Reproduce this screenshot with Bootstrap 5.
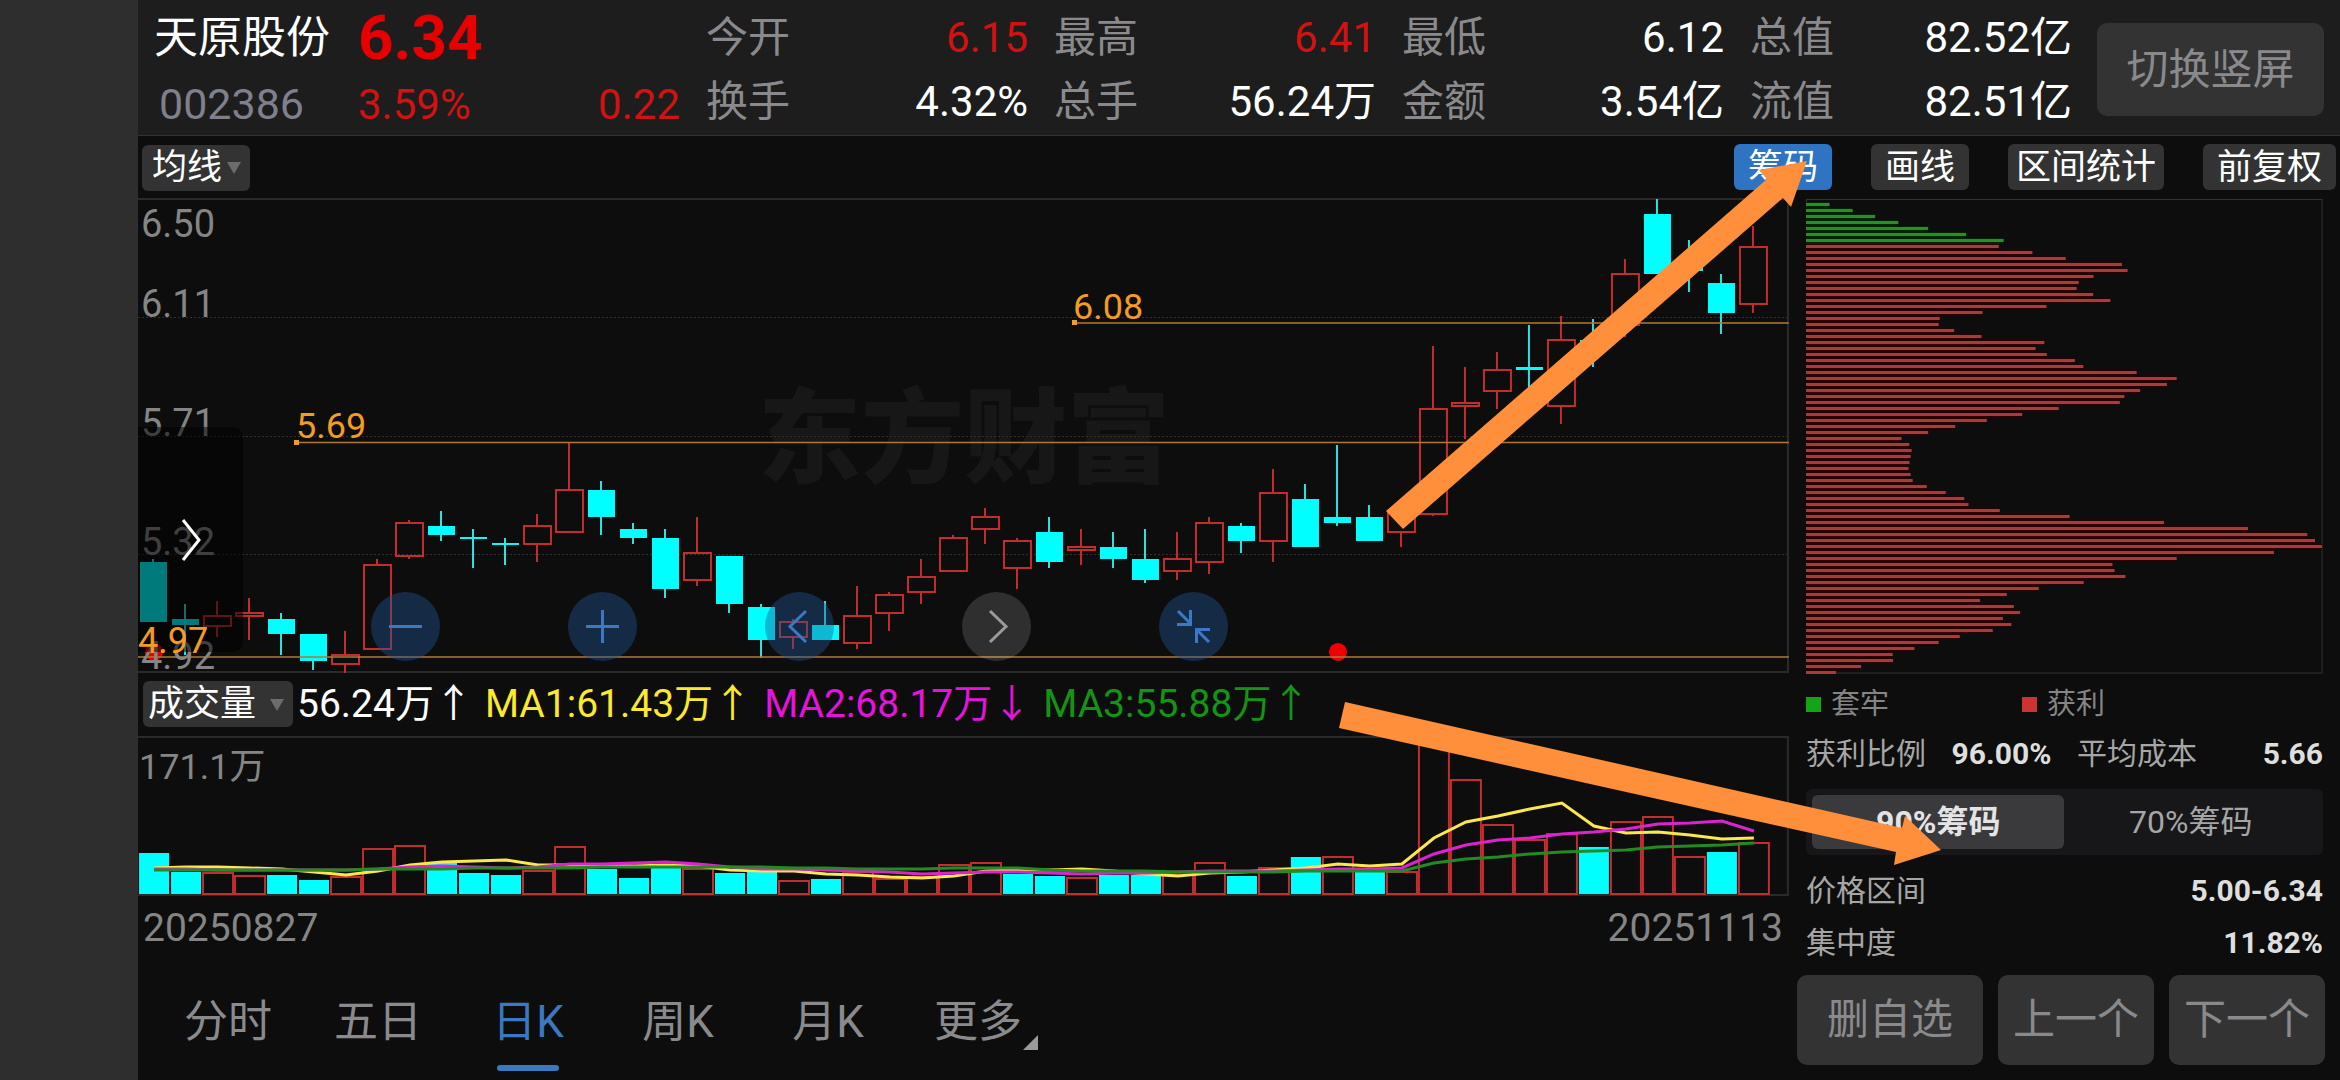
<!DOCTYPE html>
<html lang="zh-CN" data-bs-theme="dark">
<head>
<meta charset="utf-8">
<meta name="viewport" content="width=device-width, initial-scale=1">
<title>天原股份 002386 日K</title>
<link href="https://cdn.jsdelivr.net/npm/bootstrap@5.3.0/dist/css/bootstrap.min.css" rel="stylesheet">
<style>
  :root { --ink: #0d0d0d; --bar: #1d1d1d; --key: #333333; --rule: #2a2a2a; --dim: #8a8a8d; --blue: #3a78bf; --up: #e60000; }
  body { background: var(--ink); color: #fff; font-family: Roboto, "Noto Sans CJK SC", sans-serif; font-size: 42px; line-height: 1; }
  svg { display: block; }
  .side-strip { width: 138px; background: #2e2e2e; }
  .quote-head { background: var(--bar); border-bottom: 1px solid #333; height: 136px; padding: 4px 16px 0; }
  .quote-name { width: 204px; }
  .quote-name h1 { font-size: 44px; line-height: 1; height: 70px; }
  .quote-code { color: #7f7f8e; padding-left: 5px; font-size: 43px; }
  .quote-price { width: 322px; margin-right: 26px; }
  .quote-price strong { font-size: 62px; font-weight: 700; height: 70px; color: var(--up); }
  .quote-line { height: 64px; }
  .rise { color: #d01212; }
  .quote-stats { display: grid; grid-template-columns: repeat(4, 1fr); column-gap: 26px; grid-auto-rows: 64px; margin-right: 25px; }
  .quote-stats dt { font-weight: 400; color: var(--dim); }
  .key-btn { background: var(--key); color: var(--dim); border: 0; border-radius: 10px; font-size: 42px; line-height: 1; white-space: nowrap; }
  .key-btn:hover { background: #3d3d3d; color: #aaa; }
  .turn-btn { height: 93px; width: 227px; }
  .tool-row { height: 62px; padding: 0 4px; }
  .tool-btn { background: var(--key); color: #fff; border: 0; border-radius: 6px; font-size: 35px; line-height: 1; height: 46px; padding: 0 14px; white-space: nowrap; }
  .tool-btn.tight { padding: 0 8px; }
  .tool-btn.on { background: #2f73c3; }
  .tool-keys { gap: 39px; }
  .pick { position: relative; }
  .pick select { appearance: none; background: var(--key); color: #fff; border: 0; border-radius: 6px; height: 46px; line-height: 46px; }
  .pick svg { position: absolute; right: 9px; top: 18px; pointer-events: none; }
  .pick-line select { width: 108px; padding: 0 0 0 10px; font-size: 35px; }
  .pick-vol select { width: 150px; padding: 0 0 0 5px; font-size: 36px; }
  .plot { width: 100%; height: auto; }
  .axis-text { fill: #858585; font-size: 38px; }
  .mark-text { fill: #f39c22; font-size: 36px; }
  .brand-text { fill: #171717; font-size: 103px; font-weight: 900; }
  .fold-btn { position: absolute; left: 0; top: 229px; width: 105px; height: 225px; background: rgba(0,0,0,.52); border: 0; border-radius: 0 10px 10px 0; padding: 0 0 0 36px; }
  .low-tag { position: absolute; left: 0; top: 425px; color: #f39c22; font-size: 36px; line-height: 36px; }
  .pan-keys { position: absolute; left: 233px; top: 394px; gap: 128px; }
  .pan-btn { width: 69px; height: 69px; border: 0; border-radius: 50%; padding: 0; background: rgba(34,86,148,.42); color: #3c78c4; }
  .pan-btn.idle { background: rgba(255,255,255,.14); color: #9a9a9a; }
  .vol-row { height: 63px; padding-left: 5px; font-size: 39px; white-space: nowrap; }
  .vol-row > span { margin-right: 12px; }
  .ma-one { color: #fbe92d; }
  .ma-two { color: #e414dc; }
  .ma-three { color: #149414; }
  .date-row { height: 64px; padding: 2px 6px 0 5px; color: #858585; font-size: 39px; }
  .period-nav { padding-left: 15px; }
  .period-nav a { position: relative; width: 150px; height: 120px; padding-top: 4px; color: var(--dim); font-size: 44px; text-decoration: none; }
  .period-nav a.active { color: var(--blue); }
  .period-nav a.active::after { content: ""; position: absolute; left: 44px; right: 44px; bottom: 9px; height: 6px; border-radius: 3px; background: var(--blue); }
  .period-nav svg { position: absolute; right: 15px; bottom: 30px; }
  .chip-side { flex: 0 0 551px; }
  .chip-body { padding: 0 17px; font-size: 30px; color: #a6a6a6; }
  .chip-legend { height: 60px; font-size: 29px; color: #858585; }
  .chip-legend span { width: 216px; }
  .chip-legend i { width: 15px; height: 15px; margin-right: 10px; }
  .chip-legend .held { background: #14a514; }
  .chip-legend .gain { background: #cc3333; }
  .chip-row { height: 52px; padding-top: 2px; }
  .chip-row.first { height: 38px; margin-bottom: 17px; }
  .chip-row b { color: #dedede; }
  .chip-switch { height: 66px; background: #17171a; border-radius: 6px; padding: 6px; margin-bottom: 9px; }
  .chip-switch button { background: none; border: 0; border-radius: 6px; color: #a6a6a6; font-size: 32px; line-height: 1; }
  .chip-switch button.on { background: #3a3a3c; color: #e4e4e4; font-weight: 700; }
  .stock-keys { gap: 15px; padding: 7px 15px 15px 8px; }
  .stock-keys .key-btn { height: 90px; padding: 0 15px; }
  .stock-keys .wide { padding: 0 30px; }
  .pointer-layer { position: absolute; left: 0; top: 0; width: 100%; height: auto; pointer-events: none; }
</style>
</head>
<body>
<div class="d-flex min-vh-100 position-relative overflow-hidden">
  <div class="side-strip flex-shrink-0"></div>
  <main class="flex-grow-1">
    <header class="quote-head d-flex align-items-center">
      <div class="quote-name flex-shrink-0">
        <h1 class="fw-normal m-0 d-flex align-items-center">天原股份</h1>
        <div class="quote-code quote-line d-flex align-items-center">002386</div>
      </div>
      <div class="quote-price flex-shrink-0">
        <strong class="d-flex align-items-center">6.34</strong>
        <div class="quote-line rise d-flex align-items-center justify-content-between"><span>3.59%</span><span>0.22</span></div>
      </div>
      <dl class="quote-stats flex-grow-1 mb-0">
        <div class="d-flex justify-content-between align-items-center"><dt>今开</dt><dd class="m-0 rise">6.15</dd></div>
        <div class="d-flex justify-content-between align-items-center"><dt>最高</dt><dd class="m-0 rise">6.41</dd></div>
        <div class="d-flex justify-content-between align-items-center"><dt>最低</dt><dd class="m-0">6.12</dd></div>
        <div class="d-flex justify-content-between align-items-center"><dt>总值</dt><dd class="m-0">82.52亿</dd></div>
        <div class="d-flex justify-content-between align-items-center"><dt>换手</dt><dd class="m-0">4.32%</dd></div>
        <div class="d-flex justify-content-between align-items-center"><dt>总手</dt><dd class="m-0">56.24万</dd></div>
        <div class="d-flex justify-content-between align-items-center"><dt>金额</dt><dd class="m-0">3.54亿</dd></div>
        <div class="d-flex justify-content-between align-items-center"><dt>流值</dt><dd class="m-0">82.51亿</dd></div>
      </dl>
      <button type="button" class="key-btn turn-btn flex-shrink-0">切换竖屏</button>
    </header>

    <div class="tool-row d-flex align-items-center justify-content-between">
      <div class="pick pick-line">
        <select aria-label="主图指标"><option>均线</option></select>
        <svg width="14" height="12" viewBox="0 0 14 12"><path d="M0 0H14L7 12Z" fill="#6c6c6c"/></svg>
      </div>
      <div class="tool-keys d-flex">
        <button type="button" class="tool-btn on">筹码</button>
        <button type="button" class="tool-btn">画线</button>
        <button type="button" class="tool-btn tight">区间统计</button>
        <button type="button" class="tool-btn">前复权</button>
      </div>
    </div>

    <div class="d-flex">
      <section class="flex-grow-1">
        <div class="position-relative">
          <svg class="plot" viewBox="138 198 1651 475" role="img" aria-label="日K线图">
            <text class="brand-text" x="758" y="475">东方财富</text>
            <path d="M138 199H1788V672H138" fill="none" stroke="#2a2a2a" stroke-width="2"/>
            <path d="M138 317.500H1788M138 436.500H1788M138 554.500H1788" stroke="#333" stroke-dasharray="2 2"/>
            <g id="candles"></g>
            <circle cx="154" cy="652" r="9" fill="#e60000"/>
            <circle cx="1338" cy="652" r="9" fill="#f00000"/>
            <path d="M1074 323H1789M296 442.500H1789M138 657H1789" stroke="#b07a35" stroke-width="1.500"/>
            <path d="M1072 320h5v5h-5zM294 440h5v5h-5z" fill="#f39c22"/>
            <text class="mark-text" x="1073" y="319">6.08</text>
            <text class="mark-text" x="296" y="438">5.69</text>
            <text class="axis-text" x="141" y="237">6.50</text>
            <text class="axis-text" x="141" y="317">6.11</text>
            <text class="axis-text" x="141" y="436">5.71</text>
            <text class="axis-text" x="141" y="555">5.32</text>
            <text class="axis-text" x="141" y="669">4.92</text>
          </svg>
          <button type="button" class="fold-btn" aria-label="展开">
            <svg width="34" height="44" viewBox="0 0 34 44"><path d="M9 2L25 22L9 42" fill="none" stroke="#fff" stroke-width="3"/></svg>
          </button>
          <span class="low-tag">4.97</span>
          <div class="pan-keys d-flex">
            <button type="button" class="pan-btn" aria-label="缩小"><svg viewBox="0 0 69 69"><path d="M18 34.500H51" fill="none" stroke="currentColor" stroke-width="3"/></svg></button>
            <button type="button" class="pan-btn" aria-label="放大"><svg viewBox="0 0 69 69"><path d="M18 34.500H51M34.500 18V51" fill="none" stroke="currentColor" stroke-width="3"/></svg></button>
            <button type="button" class="pan-btn" aria-label="左移"><svg viewBox="0 0 69 69"><path d="M41 19L25 34.500L41 50" fill="none" stroke="currentColor" stroke-width="3"/></svg></button>
            <button type="button" class="pan-btn idle" aria-label="右移"><svg viewBox="0 0 69 69"><path d="M28 19L44 34.500L28 50" fill="none" stroke="currentColor" stroke-width="3"/></svg></button>
            <button type="button" class="pan-btn" aria-label="还原"><svg viewBox="0 0 69 69"><path d="M19 19L31 31M31.500 18V32.500H18M50 50L38 38M37.500 51V37.500H51" fill="none" stroke="currentColor" stroke-width="3"/></svg></button>
          </div>
        </div>

        <div class="vol-row d-flex align-items-center">
          <div class="pick pick-vol me-1">
            <select aria-label="副图指标"><option>成交量</option></select>
            <svg width="14" height="12" viewBox="0 0 14 12"><path d="M0 0H14L7 12Z" fill="#6c6c6c"/></svg>
          </div>
          <span>56.24万↑</span>
          <span class="ma-one">MA1:61.43万↑</span>
          <span class="ma-two">MA2:68.17万↓</span>
          <span class="ma-three">MA3:55.88万↑</span>
        </div>
        <svg class="plot" viewBox="138 736 1651 160" role="img" aria-label="成交量图">
          <path d="M138 737H1788V895H138" fill="none" stroke="#2a2a2a" stroke-width="2"/>
          <g id="volumes"></g>
          <g id="averages" fill="none" stroke-width="3"></g>
          <text x="139" y="779" fill="#858585" font-size="36">171.1万</text>
        </svg>
        <div class="date-row d-flex align-items-center justify-content-between"><span>20250827</span><span>20251113</span></div>
        <nav class="period-nav d-flex">
          <a href="#" class="d-flex align-items-center justify-content-center">分时</a>
          <a href="#" class="d-flex align-items-center justify-content-center">五日</a>
          <a href="#" class="d-flex align-items-center justify-content-center active" aria-current="page">日K</a>
          <a href="#" class="d-flex align-items-center justify-content-center">周K</a>
          <a href="#" class="d-flex align-items-center justify-content-center">月K</a>
          <a href="#" class="d-flex align-items-center justify-content-center">更多<svg width="15" height="15" viewBox="0 0 15 15"><path d="M15 0V15H0Z" fill="#9a9a9c"/></svg></a>
        </nav>
      </section>

      <aside class="chip-side">
        <div class="chip-body">
          <svg class="plot" viewBox="0 0 517 476" role="img" aria-label="筹码分布">
            <path d="M.5 1.500H516V475H.5Z" fill="none" stroke="#333"/>
            <g id="chips"></g>
          </svg>
          <div class="chip-legend d-flex align-items-center">
            <span class="d-flex align-items-center"><i class="held"></i>套牢</span>
            <span class="d-flex align-items-center"><i class="gain"></i>获利</span>
          </div>
          <div class="chip-row first d-flex align-items-center justify-content-between">
            <span>获利比例</span><b>96.00%</b><span>平均成本</span><b class="ps-4 ms-3">5.66</b>
          </div>
          <div class="chip-switch d-flex">
            <button type="button" class="on flex-fill w-50">90%筹码</button>
            <button type="button" class="flex-fill w-50">70%筹码</button>
          </div>
          <div class="chip-row d-flex align-items-center justify-content-between"><span>价格区间</span><b>5.00-6.34</b></div>
          <div class="chip-row d-flex align-items-center justify-content-between"><span>集中度</span><b>11.82%</b></div>
        </div>
        <div class="stock-keys d-flex justify-content-between">
          <button type="button" class="key-btn wide">删自选</button>
          <button type="button" class="key-btn">上一个</button>
          <button type="button" class="key-btn">下一个</button>
        </div>
      </aside>
    </div>
  </main>
  <svg class="pointer-layer" viewBox="0 0 2340 1080" aria-hidden="true">
    <path d="M1386 511L1767 179L1759 170L1807 161L1791 207L1783 198L1403 529Z" fill="#ff8f3a"/>
    <path d="M1345 702L1902 828L1905 816L1941 850L1894 865L1896 852L1339 728Z" fill="#ff8f3a"/>
  </svg>
</div>
<script src="https://cdn.jsdelivr.net/npm/bootstrap@5.3.0/dist/js/bootstrap.bundle.min.js"></script>
<script>
  const RED = '#c22d2d', CYAN = '#00ffff', STEP = 32, FIRST = 153;
  // direction (c = close below open, r = close above open), high, body top, body bottom, low
  const candles = [
    ['c',559,562,622,622],['c',604,619,625,655],['r',601,616,626,637],['r',598,613,616,640],['c',613,619,634,655],
    ['c',634,634,661,670],['r',631,655,664,673],['r',559,565,649,649],['r',520,523,556,559],['c',511,526,535,541],
    ['c',529,537,539,568],['c',538,543,545,565],['r',514,526,544,562],['r',442,490,532,532],['c',481,490,517,535],
    ['c',523,529,538,544],['c',529,538,589,598],['r',517,553,580,586],['c',556,556,604,613],['c',604,607,640,658],
    ['r',619,622,637,649],['c',601,625,640,640],['r',586,616,643,649],['r',592,595,613,631],['r',559,577,592,604],
    ['r',535,538,571,571],['r',508,517,529,544],['r',538,541,568,589],['c',517,532,562,568],['r',529,547,550,565],
    ['c',532,547,559,568],['c',529,559,580,583],['r',532,559,571,580],['r',517,523,562,574],['c',523,526,541,553],
    ['r',469,493,541,562],['c',484,499,547,547],['c',445,517,523,526],['c',505,517,541,541],['r',505,511,532,547],
    ['r',346,409,514,516],['r',367,403,406,439],['r',352,370,391,409],['c',325,367,370,388],['r',316,340,406,424],
    ['c',319,340,350,367],['r',259,274,325,337],['c',199,214,274,274],['c',240,262,271,292],['c',274,283,313,334],
    ['r',226,247,304,313]
  ];
  document.getElementById('candles').innerHTML = candles.map(([d, hi, top, low, lo], i) => {
    const x = FIRST + i * STEP;
    if (d === 'c') return `<path d="M${x} ${hi}V${lo}" stroke="#33e0e0" stroke-width="2"/><rect x="${x - 13}" y="${top}" width="27" height="${low - top}" fill="${CYAN}"/>`;
    return `<path d="M${x} ${hi}V${top}M${x} ${low}V${lo}M${x - 13} ${top}H${x + 14}V${low}H${x - 13}Z" fill="none" stroke="${RED}" stroke-width="2"/>`;
  }).join('');

  const volumeTops = [853,872,873,876,875,880,877,849,846,862,873,875,871,847,869,878,868,869,873,871,881,879,872,879,877,865,863,874,876,878,875,875,875,863,876,868,857,857,872,872,741,780,825,840,834,847,822,817,857,852,843];
  const volumeDirs = 'ccrrccrrrcccrrcccrccrcrrrrrccrccrrcrcrcrrrrrrcrrrcr';
  document.getElementById('volumes').innerHTML = volumeTops.map((y, i) => {
    const x = 138 + i * STEP;
    return volumeDirs[i] === 'c'
      ? `<rect x="${x + 1}" y="${y}" width="30" height="${894 - y}" fill="${CYAN}"/>`
      : `<path d="M${x + 1} ${y}H${x + 31}V894H${x + 1}Z" fill="none" stroke="${RED}" stroke-width="2"/>`;
  }).join('');

  const averages = [
    ['#fbe84c', [868,867,867,868,869,872,875,871,865,862,861,860,865,865,865,866,865,866,870,871,871,874,875,877,878,876,871,870,870,869,871,874,876,873,872,870,868,864,866,864,838,822,816,809,803,826,833,832,835,839,838]],
    ['#dd22d0', [869,869,870,870,870,870,870,869,867,866,867,868,867,864,864,863,862,864,867,869,869,870,871,872,874,873,872,872,873,874,873,873,872,871,871,871,870,869,869,868,854,845,840,838,834,832,829,824,823,821,831]],
    ['#228b22', [870,870,870,870,870,870,870,869,869,869,868,868,868,868,867,867,867,867,867,867,868,868,869,869,869,868,868,868,870,871,871,871,872,872,872,872,871,871,871,871,863,859,857,854,852,851,850,847,846,845,843]]
  ];
  document.getElementById('averages').innerHTML = averages.map(([c, ys]) =>
    `<polyline stroke="${c}" points="${ys.map((y, i) => `${154 + i * STEP},${y}`).join(' ')}"/>`).join('');

  // Share held at each price level, highest price first
  const chips = [67,133,197,263,348,456,563,549,645,740,900,916,819,777,771,818,867,685,503,381,378,422,500,679,654,686,766,790,942,1056,1028,952,907,894,720,616,515,425,348,272,294,301,298,295,292,298,304,344,398,451,463,552,751,1020,1259,1428,1450,1470,1333,1056,873,879,910,791,663,572,496,592,610,561,585,532,438,378,309,247,248,157,86];
  document.getElementById('chips').innerHTML = chips.map((v, i) => {
    const w = v / 1470 * 516, y = 6 + i * 6, green = i < 7;
    return `<rect x="0" y="${y - 2}" width="${w}" height="6" fill="${green ? '#022402' : '#260202'}"/><rect x="0" y="${y - 1}" width="${w}" height="3" fill="${green ? '#2a8c2a' : '#a83c3c'}"/>`;
  }).join('');
</script>
</body>
</html>
